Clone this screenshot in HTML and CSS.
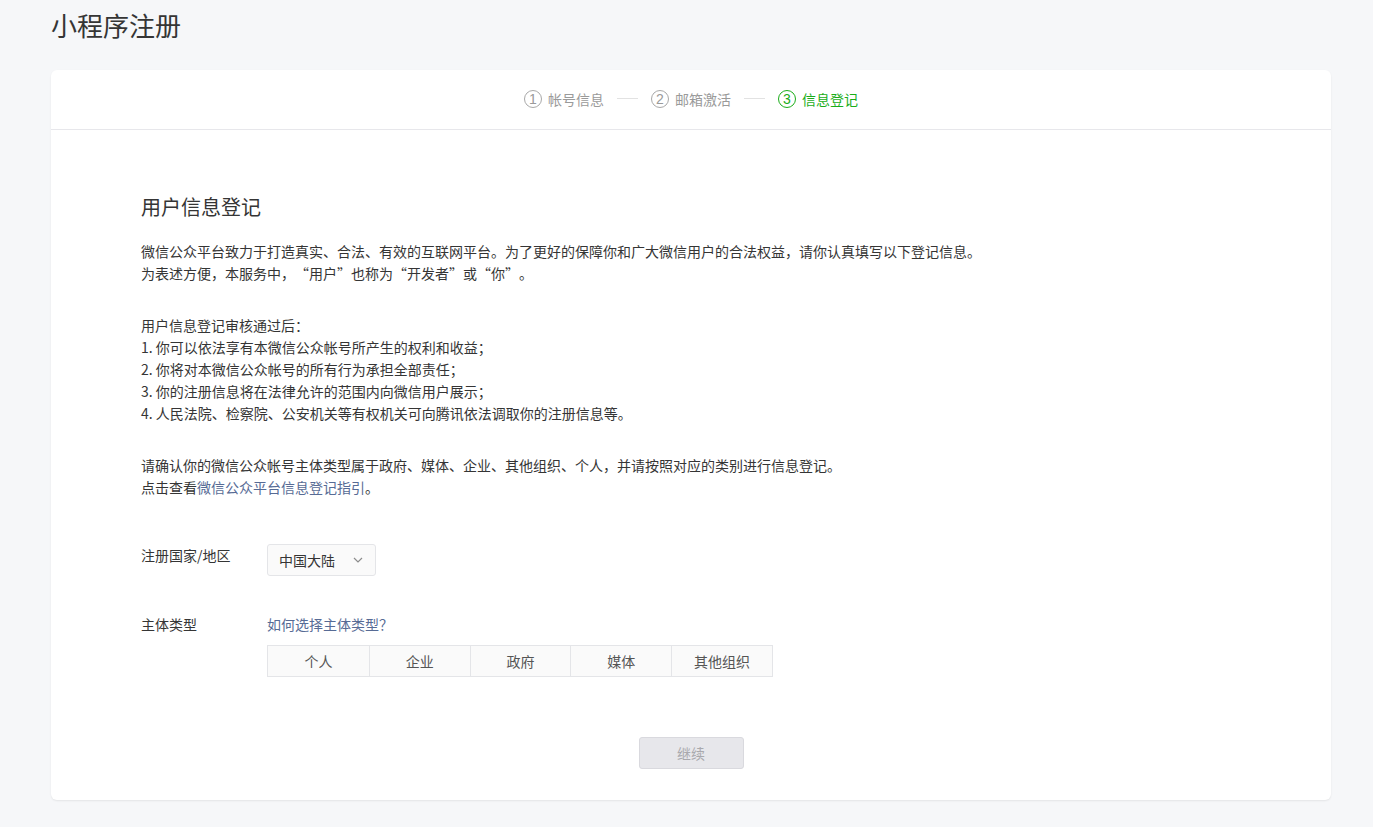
FILE: index.html
```html
<!DOCTYPE html>
<html lang="zh-CN">
<head>
<meta charset="utf-8">
<title>小程序注册</title>
<link rel="stylesheet" href="styles.css">
</head>
<body>
<div class="page">
  <h1 class="page-title">小程序注册</h1>
  <div class="card">
    <div class="steps">
      <div class="step"><span class="step-num">1</span><span class="step-text">帐号信息</span></div>
      <span class="step-line"></span>
      <div class="step"><span class="step-num">2</span><span class="step-text">邮箱激活</span></div>
      <span class="step-line"></span>
      <div class="step step-active"><span class="step-num">3</span><span class="step-text">信息登记</span></div>
    </div>
    <div class="card-body">
      <h2 class="section-title">用户信息登记</h2>
      <p class="para">微信公众平台致力于打造真实、合法、有效的互联网平台。为了更好的保障你和广大微信用户的合法权益，请你认真填写以下登记信息。<br>为表述方便，本服务中，<span class="ql">“</span>用户<span class="qr">”</span>也称为<span class="ql">“</span>开发者<span class="qr">”</span>或<span class="ql">“</span>你<span class="qr">”</span>。</p>
      <p class="para">用户信息登记审核通过后：<br>1. 你可以依法享有本微信公众帐号所产生的权利和收益；<br>2. 你将对本微信公众帐号的所有行为承担全部责任；<br>3. 你的注册信息将在法律允许的范围内向微信用户展示；<br>4. 人民法院、检察院、公安机关等有权机关可向腾讯依法调取你的注册信息等。</p>
      <p class="para">请确认你的微信公众帐号主体类型属于政府、媒体、企业、其他组织、个人，并请按照对应的类别进行信息登记。<br>点击查看<a class="link" href="#">微信公众平台信息登记指引</a>。</p>

      <div class="form-row row-region">
        <div class="form-label">注册国家/地区</div>
        <div class="form-ctrl">
          <div class="select">
            <span>中国大陆</span>
            <svg class="chev" width="10" height="6" viewBox="0 0 10 6"><path d="M1 1l4 4 4-4" fill="none" stroke="#8c8c8c" stroke-width="1.2"/></svg>
          </div>
        </div>
      </div>

      <div class="form-row row-type">
        <div class="form-label">主体类型</div>
        <div class="form-ctrl">
          <a class="link type-help" href="#">如何选择主体类型？</a>
          <div class="seg">
            <div class="seg-item">个人</div>
            <div class="seg-item">企业</div>
            <div class="seg-item">政府</div>
            <div class="seg-item">媒体</div>
            <div class="seg-item">其他组织</div>
          </div>
        </div>
      </div>

      <div class="actions">
        <button class="btn-next" disabled>继续</button>
      </div>
    </div>
  </div>
</div>
</body>
</html>
```

FILE: styles.css
```css
* { box-sizing: border-box; }
html, body { margin: 0; padding: 0; }
body {
  background: #f6f7f9;
  font-family: "Noto Sans CJK SC", "Noto Sans", sans-serif;
  color: #353535;
}
.page {
  padding: 0 42px 27px 51px;
}
.page-title {
  margin: 0;
  height: 70px;
  padding-top: 7px;
  font-size: 26px;
  line-height: 36px;
  font-weight: 400;
  color: #353535;
}
.card {
  width: 1280px;
  background: #fff;
  border-radius: 6px;
  box-shadow: 0 1px 2px rgba(0,0,0,0.08);
  height: 730px;
}
.steps {
  height: 60px;
  border-bottom: 1px solid #e7e7eb;
  display: flex;
  align-items: center;
  justify-content: center;
  padding-bottom: 2px;
}
.step {
  display: flex;
  align-items: center;
  color: #9a9a9a;
  font-size: 14px;
}
.step-num {
  width: 18px;
  height: 18px;
  border: 1px solid #a8a8a8;
  border-radius: 50%;
  font-size: 14px;
  line-height: 16px;
  text-align: center;
  margin-right: 6px;
  font-family: "Liberation Sans", Arial, sans-serif;
}
.step-active { color: #1aad19; }
.step-active .step-num { border-color: #1aad19; }
.step-line {
  width: 21px;
  height: 1px;
  background: #e2e2e2;
  margin: 0 13px;
}
.card-body {
  padding: 56px 90px 0 90px;
}
.section-title {
  margin: 0 0 12px;
  font-size: 20px;
  line-height: 42px;
  font-weight: 400;
  color: #353535;
}
.para {
  margin: 0 0 30px;
  font-size: 14px;
  line-height: 22px;
  color: #353535;
}
.ql, .qr {
  display: inline-block;
  width: 1em;
}
.ql { text-align: right; }
.qr { text-align: left; }
.link { color: #576b95; text-decoration: none; }
.form-row {
  display: flex;
  font-size: 14px;
}
.row-region { margin-top: 46px; }
.form-label {
  width: 126px;
  color: #353535;
  line-height: 22px;
}
.select {
  width: 109px;
  height: 32px;
  border: 1px solid #e4e5e8;
  border-radius: 3px;
  background: #fafafa;
  display: flex;
  align-items: center;
  justify-content: space-between;
  padding: 0 12px 0 11px;
  color: #353535;
}
.row-type { margin-top: 37px; }
.type-help { display: block; line-height: 22px; }
.seg {
  display: flex;
  margin-top: 10px;
  border: 1px solid #e4e5e8;
  width: 506px;
  background: #fafafa;
}
.seg-item {
  width: 101px;
  height: 30px;
  line-height: 30px;
  text-align: center;
  color: #555;
  border-left: 1px solid #e4e5e8;
}
.seg-item:first-child { border-left: none; }
.actions {
  display: flex;
  justify-content: center;
  margin-top: 60px;
}
.btn-next {
  width: 105px;
  height: 32px;
  border: 1px solid #d9d9de;
  border-radius: 3px;
  background: #e7e7eb;
  color: #a9a9ad;
  font-family: inherit;
  font-size: 14px;
}
```
